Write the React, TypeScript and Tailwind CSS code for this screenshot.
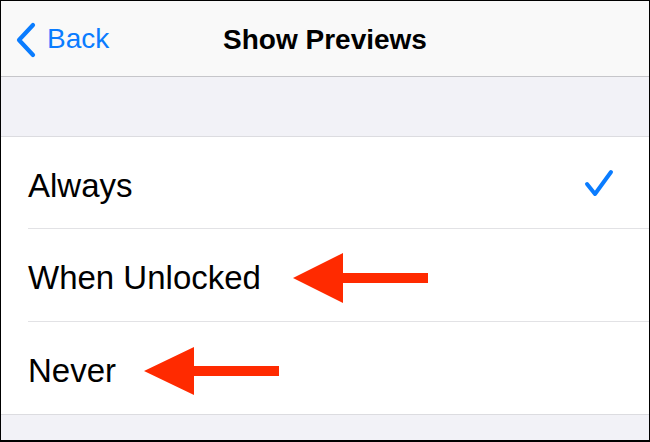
import React from 'react';

const options = [
  { id: 'always', label: 'Always', h: 'h-[92px]', checked: true },
  { id: 'unlocked', label: 'When Unlocked', h: 'h-[93px]', checked: false },
  { id: 'never', label: 'Never', h: 'h-[92px]', checked: false },
];

export default function App() {
  return (
    <div
      className="relative w-[650px] h-[442px] overflow-hidden border border-b-2 border-black bg-[#f2f2f7] flex flex-col"
      style={{ fontFamily: '"Liberation Sans", Arial, sans-serif' }}
    >
      {/* Nav bar */}
      <div className="h-[76px] shrink-0 bg-[#f9f9f9] border-b border-[#c6c6ca] grid grid-cols-[1fr_auto_1fr] items-center pt-[2px]">
        <button className="flex items-center gap-[11px] pl-[15px] text-[#0a7cff] text-[28px] leading-none">
          <svg width="20" height="36" viewBox="0 0 20 36" fill="none">
            <path d="M17 3 L3 18 L17 33" stroke="#0a7cff" strokeWidth="4.2" strokeLinecap="round" strokeLinejoin="round" />
          </svg>
          <span className="-mt-[1px]">Back</span>
        </button>
        <h1 className="text-[28px] font-bold text-black leading-none">Show Previews</h1>
        <div />
      </div>

      {/* Spacer band */}
      <div className="h-[59px] shrink-0" />

      {/* Options list */}
      <div className="bg-white border-t border-b border-[#dcdce0]">
        {options.map((opt, i) => (
          <div key={opt.id} className="pl-[27px]">
            <div
              className={`${opt.h} flex items-center justify-between pr-[34px] pt-[5px] ${
                i < options.length - 1 ? 'border-b border-[#e2e2e5]' : ''
              }`}
            >
              <span className="text-[33px] text-black leading-none">{opt.label}</span>
              {opt.checked && (
                <svg width="32" height="32" viewBox="0 0 32 32" fill="none" className="-mt-[3px]">
                  <path d="M4 16 L12 26 L28 4" stroke="#0a7cff" strokeWidth="4" strokeLinecap="round" strokeLinejoin="round" />
                </svg>
              )}
            </div>
          </div>
        ))}
      </div>

      {/* Annotation arrows */}
      <svg className="pointer-events-none absolute -left-px -top-px" width="650" height="442" viewBox="0 0 650 442">
        <polygon points="293,278 343,253 343,273 428,273 428,283 343,283 343,303" fill="#ff2a00" />
        <polygon points="144,371 194,347 194,366 279,366 279,376 194,376 194,395" fill="#ff2a00" />
      </svg>
    </div>
  );
}
